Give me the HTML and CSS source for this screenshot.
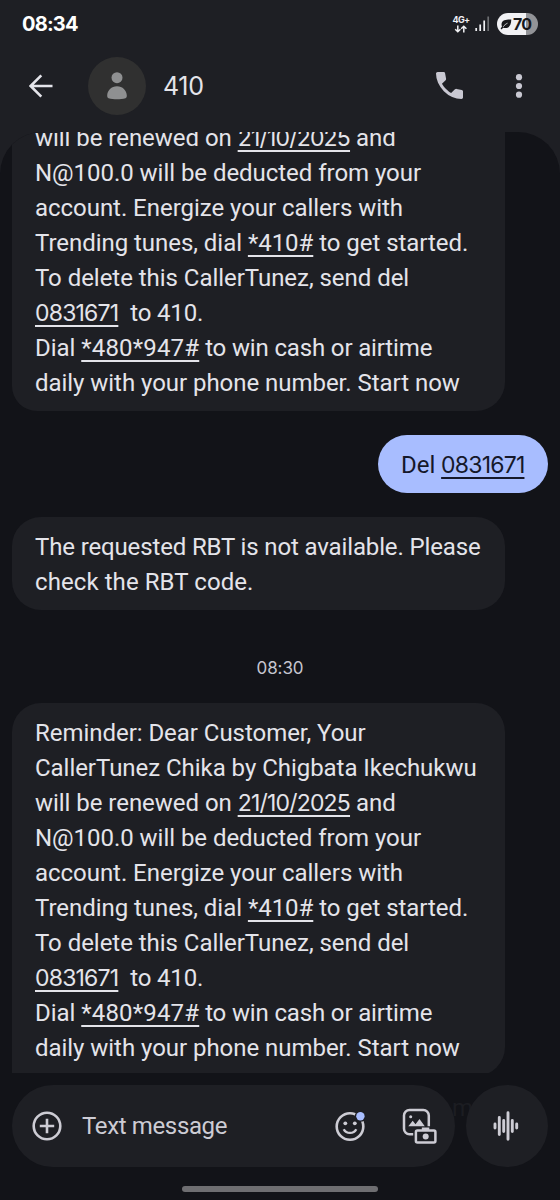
FILE: index.html
```html
<!DOCTYPE html>
<html lang="en">
<head>
<meta charset="utf-8">
<title>410</title>
<link rel="stylesheet" href="styles.css">
</head>
<body>
<div class="phone">
  <header class="top">
    <div class="status">
      <span class="clock">08:34</span>
      <div class="indicators">
        <div class="network">
          <span class="net-type">4G+</span>
          <svg class="net-arrows" viewBox="0 0 14 8" width="14" height="8"><path d="M3.8 .5v6M1.2 4.2l2.6 2.6 2.6-2.6M9.8 7.5v-6M7.2 3.8l2.6-2.6 2.6 2.6" fill="none" stroke="#f1f1f4" stroke-width="1.5"/></svg>
        </div>
        <svg class="signal" viewBox="0 0 15 16" width="15" height="16"><path d="M1.2 12v3M5.2 8.5V15M9.2 4.5V15" stroke="#f1f1f4" stroke-width="1.7"/><path d="M13.2 .5V15" stroke="#6d6e72" stroke-width="1.7"/></svg>
        <div class="battery">
          <svg viewBox="0 0 12 11" width="12" height="11"><path d="M11.3.6C7 .4 2.2.8 1.6 4.6c-.2 1.300 0 2.200.4 3L.6 9.600l1 .8 1.500-1.700c4.600 1.300 8-.7 8.200-8.100z" fill="#17181b"/><path d="M3.200 7.800C4.500 6 5.700 5 7.500 4.200" stroke="#f1f1f4" stroke-width=".8" fill="none"/></svg>
          <span>70</span>
        </div>
      </div>
    </div>
    <div class="appbar">
      <svg class="back" viewBox="0 0 24 24" width="24" height="24"><path d="M23.500 12H2M12.300 1.300L1.600 12l10.700 10.700" fill="none" stroke="#e4e4ea" stroke-width="2.600"/></svg>
      <div class="avatar"><svg viewBox="0 0 20 28" width="20" height="28"><circle cx="10" cy="5.700" r="5.500" fill="#8f9091"/><path d="M.2 23.500C.2 18.500 4.500 14.200 10 14.200s9.800 4.300 9.800 9.300c0 1.500-.3 2.200-1.300 2.700-5 1.500-12 1.500-17 0-1-.5-1.300-1.200-1.300-2.700z" fill="#8f9091"/></svg></div>
      <h1 class="title">410</h1>
      <svg class="call" viewBox="3 3 18 18" width="27" height="27"><path d="M19.950 21q-3.125 0-6.175-1.362t-5.550-3.863-3.862-5.550T3 4.050q0-.45.3-.75t.75-.3H8.100q.35 0 .625.238t.325.562l.65 3.500q.05.4-.025.675T9.400 8.450L6.975 10.900q.5.925 1.187 1.787t1.513 1.663q.775.775 1.625 1.438T13.100 17l2.350-2.350q.225-.225.588-.337t.712-.063l3.450.7q.35.1.575.363T21 15.900v4.050q0 .45-.3.75t-.75.3" fill="#c9c8d2"/></svg>
      <svg class="more" viewBox="0 0 8 26" width="8" height="26"><g fill="#c9c8d2"><circle cx="4" cy="4.200" r="3.100"/><circle cx="4" cy="13" r="3.100"/><circle cx="4" cy="21.700" r="3.100"/></g></svg>
    </div>
  </header>

  <main class="thread">
    <div class="bubble bubble-cut">
      <p>will be renewed on <u class="num">21/10/2025</u> and</p>
      <p>N@100.0 will be deducted from your</p>
      <p>account. Energize your callers with</p>
      <p>Trending tunes, dial <u>*410#</u> to get started.</p>
      <p>To delete this CallerTunez, send del</p>
      <p><u class="num">0831671</u>&nbsp; <span class="close">to 410.</span></p>
      <p>Dial <u class="code">*480*947#</u> <span class="close">to win cash or airtime</span></p>
      <p>daily with your phone number. Start now</p>
    </div>
    <div class="bubble sent"><p>Del <u class="num">0831671</u></p></div>
    <div class="bubble">
      <p class="tight">The requested RBT is not available. Please</p>
      <p class="loose">check the RBT code.</p>
    </div>
    <time class="stamp">08:30</time>
    <div class="bubble bubble-last">
      <p>Reminder: Dear Customer, Your</p>
      <p>CallerTunez Chika by Chigbata Ikechukwu</p>
      <p>will be renewed on <u class="num">21/10/2025</u> and</p>
      <p>N@100.0 will be deducted from your</p>
      <p>account. Energize your callers with</p>
      <p>Trending tunes, dial <u>*410#</u> to get started.</p>
      <p>To delete this CallerTunez, send del</p>
      <p><u class="num">0831671</u>&nbsp; <span class="close">to 410.</span></p>
      <p>Dial <u class="code">*480*947#</u> <span class="close">to win cash or airtime</span></p>
      <p>daily with your phone number. Start now</p>
    </div>
  </main>

  <footer class="composer">
    <div class="field">
      <svg class="plus" viewBox="0 0 30 30" width="30" height="30"><g fill="none" stroke="#cdccd4" stroke-width="2.600"><circle cx="15" cy="15" r="13.300"/><path d="M15 7.800v14.400M7.800 15h14.400"/></g></svg>
      <span class="placeholder">Text message</span>
      <svg class="emoji" viewBox="0 0 32 32" width="32" height="32"><circle cx="15" cy="16.500" r="13.300" fill="none" stroke="#cdccd4" stroke-width="2.600"/><circle cx="10.300" cy="13.300" r="1.900" fill="#cdccd4"/><circle cx="19.800" cy="13.300" r="1.900" fill="#cdccd4"/><path d="M8.700 19.200c2.600 5 10 5 12.600 0" fill="none" stroke="#cdccd4" stroke-width="2.300"/><circle cx="25.400" cy="6.200" r="5.600" fill="#1e1f24"/><circle cx="25.400" cy="6.200" r="4.200" fill="#a8bdff"/></svg>
      <svg class="gallery" viewBox="0 0 35 36" width="35" height="36"><g fill="none" stroke="#cdccd4" stroke-width="2.500"><path d="M11.200 26.300H7.500a5.500 5.500 0 0 1-5.500-5.500V7.500A5.500 5.500 0 0 1 7.500 2h13.800a5.500 5.500 0 0 1 5.500 5.500v10.800"/><rect x="13.900" y="22.500" width="19.500" height="12" rx="1.500"/></g><path d="M19.800 22v-2.500h7.500V22z" fill="#cdccd4"/><circle cx="23.700" cy="28.500" r="3" fill="#cdccd4"/><circle cx="8.700" cy="8.800" r="1.500" fill="#cdccd4"/><path d="M6.300 18.200l4.400-5.400 2.800 3.400 4-5.200 5.300 7.200z" fill="#cdccd4"/></svg>
    </div>
    <span class="peek">m</span>
    <div class="voice"><svg viewBox="0 0 26 30" width="26" height="30"><path d="M2 13v4M6.300 6.500v17M10.700 9.500v11M15 1.800v26.400M19.300 9.500v11M23.700 13v4" stroke="#cdccd4" stroke-width="2.900" stroke-linecap="round"/></svg></div>
  </footer>
  <div class="home-bar"></div>
</div>
</body>
</html>
```
FILE: styles.css
```css
* { box-sizing: border-box; }
body { margin: 0; background: #1e1f24; font-family: Roboto, "Liberation Sans", sans-serif; }
svg { display: block; flex: none; }
p, h1 { margin: 0; font-weight: 400; }

.phone { width: 560px; height: 1200px; overflow: hidden; display: flex; flex-direction: column; background: #1e1f24; }

.top { height: 132px; flex: none; }
.status { height: 48px; display: flex; justify-content: space-between; align-items: center; padding: 0 22px; }
.clock { color: #fff; font: 700 20px/24px Inter, sans-serif; letter-spacing: -0.8px; }
.indicators { display: flex; align-items: center; }
.network { width: 18px; display: flex; flex-direction: column; align-items: center; gap: 1px; margin-right: 5px; }
.net-type { color: #f1f1f4; font: 700 9px/8px Inter, sans-serif; letter-spacing: -0.6px; }
.signal { margin-right: 7px; }
.battery { width: 41px; height: 22px; border-radius: 11px; display: flex; align-items: center; gap: 1px; padding-left: 3px; background: linear-gradient(90deg, #f1f1f4 70%, #929397 70%); color: #17181b; font: 700 16px/22px Inter, sans-serif; letter-spacing: -0.9px; }

.appbar { height: 75px; display: flex; align-items: center; padding: 0 37px 0 29px; }
.avatar { width: 58px; height: 58px; margin-left: 35px; border-radius: 50%; background: #303030; display: flex; align-items: center; justify-content: center; }
.title { flex: 1; margin-left: 17px; color: #e4e4ea; font: 400 25px/32px Inter, sans-serif; letter-spacing: -0.3px; }
.call { margin-right: 52px; }

.thread { height: 941px; flex: none; overflow: hidden; padding: 0 12px; display: flex; flex-direction: column; align-items: flex-start; background: #121318; border-radius: 42px 42px 0 0; }
.bubble { width: 493px; flex: none; padding: 12.500px 23px 10.500px; border-radius: 29px; background: #1e1f24; color: #e4e4ea; font-size: 24px; line-height: 35px; letter-spacing: -0.04px; white-space: nowrap; }
.bubble + .bubble { margin-top: 24px; }
.bubble-cut { margin-top: -11.500px; padding-top: 0; border-radius: 0 0 29px 25px; }
.bubble p { height: 35px; }
.bubble p.tight { letter-spacing: -0.14px; }
.bubble p.loose { letter-spacing: 0.08px; }
.bubble .close { letter-spacing: -0.15px; }
.bubble u { text-decoration: underline 2px; text-underline-offset: 4px; text-decoration-skip-ink: none; }
.bubble .num { font-family: Inter, sans-serif; font-size: 23px; letter-spacing: -0.8px; }
.bubble .code { letter-spacing: 0.18px; }
.bubble.sent { align-self: flex-end; width: 170px; border-radius: 29px; background: #a8bdff; color: #15182a; }
.stamp { align-self: center; margin: 46px 0 23px; color: #c5c5cf; font: 400 17px/24px Inter, sans-serif; letter-spacing: -0.1px; }
.bubble-last { border-radius: 29px 29px 29px 4px; }

.composer { height: 127px; flex: none; display: flex; justify-content: space-between; align-items: flex-start; padding: 12px 12px 0; background: #121318; position: relative; }
.field { width: 443px; height: 82px; border-radius: 41px; background: #1e1f24; display: flex; align-items: center; padding: 0 18px 0 20px; }
.placeholder { flex: 1; margin-left: 20px; color: #cdccd4; font-size: 24px; line-height: 32px; letter-spacing: -0.36px; }
.emoji { margin-right: 35px; }
.voice { width: 82px; height: 82px; padding-right: 2px; border-radius: 50%; background: #1e1f24; display: flex; align-items: center; justify-content: center; position: relative; }
.peek { position: absolute; left: 452px; top: 19px; color: #1c1d22; font-size: 24px; line-height: 32px; }
.home-bar { width: 196px; height: 6px; border-radius: 3px; background: #6e6e71; position: absolute; left: 182px; top: 1186px; }
```
